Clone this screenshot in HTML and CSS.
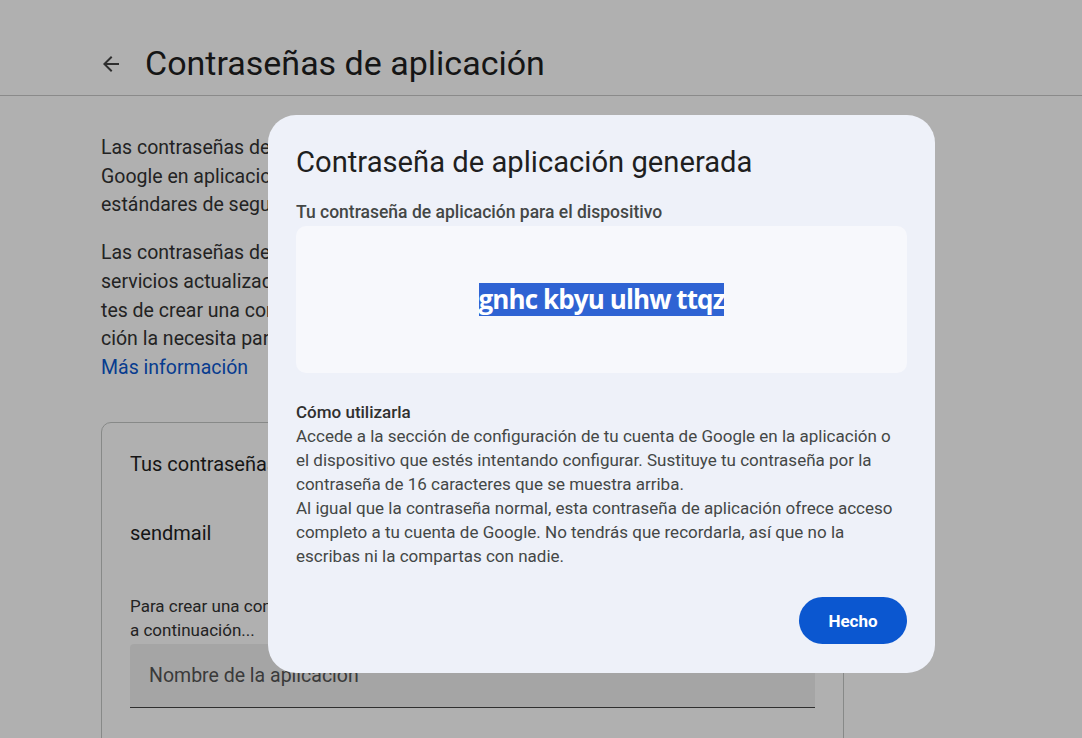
FILE: index.html
```html
<!DOCTYPE html>
<html lang="es">
<head>
    <meta charset="UTF-8">
    <meta name="viewport" content="width=device-width, initial-scale=1.0">
    <title>Contraseñas de aplicación</title>
    <link rel="stylesheet" href="styles.css">
</head>
<body>
    <header class="top-bar">
        <button class="back-btn" aria-label="Atrás">
            <svg width="24" height="24" viewBox="0 0 24 24"><path d="M20 11H7.83l5.59-5.59L12 4l-8 8 8 8 1.41-1.41L7.83 13H20v-2z" fill="currentColor"/></svg>
        </button>
        <h1>Contraseñas de aplicación</h1>
    </header>

    <main class="content">
        <p class="intro">Las contraseñas de aplicación te permiten iniciar sesión en tu cuenta de<br>Google en aplicaciones y servicios antiguos que no admiten los<br>estándares de seguridad modernos.</p>
        <p class="intro">Las contraseñas de aplicación son menos seguras que usar aplicaciones y<br>servicios actualizados que utilicen estándares de seguridad modernos. An-<br>tes de crear una contraseña de aplicación, comprueba si tu aplica-<br>ción la necesita para iniciar sesión.<br><a href="#" class="link">Más información</a></p>

        <section class="card">
            <h2>Tus contraseñas de aplicación</h2>
            <div class="app-row">sendmail</div>
            <p class="hint">Para crear una contraseña nueva específica de una aplicación, escribe un nombre<br>a continuación...</p>
            <div class="field">Nombre de la aplicación</div>
        </section>
    </main>

    <div class="scrim"></div>

    <div class="dialog" role="dialog">
        <h2 class="dialog-title">Contraseña de aplicación generada</h2>
        <div class="label">Tu contraseña de aplicación para el dispositivo</div>
        <div class="pass-box">
            <span class="pass">gnhc kbyu ulhw ttqz</span>
        </div>
        <div class="how">
            <div class="how-title">Cómo utilizarla</div>
            <p>Accede a la sección de configuración de tu cuenta de Google en la aplicación o el dispositivo que estés intentando configurar. Sustituye tu contraseña por la contraseña de 16 caracteres que se muestra arriba.<br>Al igual que la contraseña normal, esta contraseña de aplicación ofrece acceso completo a tu cuenta de Google. No tendrás que recordarla, así que no la escribas ni la compartas con nadie.</p>
        </div>
        <div class="actions">
            <button class="done-btn">Hecho</button>
        </div>
    </div>
</body>
</html>
```

FILE: styles.css
```css
body {
    margin: 0;
    background: #fff;
    color: #1f1f1f;
    font-family: Roboto, 'Liberation Sans', sans-serif;
    overflow: hidden;
}

.top-bar {
    display: flex;
    align-items: center;
    height: 96px;
    padding: 30px 0 0 99px;
    border-bottom: 1px solid #c8c8c8;
    box-sizing: border-box;
}

.back-btn {
    background: none;
    border: none;
    padding: 0;
    width: 24px;
    height: 24px;
    color: #444;
    margin-right: 22px;
    margin-top: 2px;
}

.top-bar h1 {
    margin: 0;
    font-weight: 400;
    font-size: 34px;
    line-height: 44px;
}

.content {
    padding: 38px 0 0 101px;
    width: 743px;
}

.intro {
    margin: 0 0 19px;
    font-size: 19.5px;
    line-height: 28.7px;
    color: #333;
    white-space: nowrap;
}

.link {
    color: #0b57d0;
    text-decoration: none;
}

.card {
    margin-top: 39px;
    border: 1px solid #c4c7c5;
    border-radius: 10px;
    padding: 27px 28px 40px;
    height: 400px;
}

.card h2 {
    margin: 0;
    font-size: 20px;
    font-weight: 400;
    line-height: 28px;
}

.app-row {
    font-size: 20px;
    line-height: 28px;
    margin-top: 41px;
}

.hint {
    margin: 47px 0 0;
    font-size: 17px;
    line-height: 24px;
    color: #333;
}

.field {
    margin-top: 2px;
    height: 64px;
    background: #f0f0f0;
    border-bottom: 1px solid #444;
    border-radius: 4px 4px 0 0;
    display: flex;
    align-items: center;
    padding-left: 19px;
    font-size: 19.5px;
    color: #555;
    box-sizing: border-box;
}

.scrim {
    position: fixed;
    inset: 0;
    background: rgba(0, 0, 0, 0.31);
}

.dialog {
    position: absolute;
    left: 268px;
    top: 115px;
    width: 667px;
    height: 558px;
    box-sizing: border-box;
    padding: 26px 28px 0;
    background: #eef1f9;
    border-radius: 28px;
    display: flex;
    flex-direction: column;
}

.dialog-title {
    margin: 0;
    font-weight: 400;
    font-size: 29.2px;
    line-height: 42px;
    color: #1f1f1f;
}

.label {
    margin-top: 18px;
    font-size: 17.5px;
    font-weight: 500;
    line-height: 22px;
    color: #444746;
}

.pass-box {
    margin-top: 3px;
    height: 147px;
    background: #f7f8fc;
    border-radius: 10px;
    display: flex;
    align-items: center;
    justify-content: center;
}

.pass {
    font-family: 'Open Sans', sans-serif;
    font-weight: 700;
    font-size: 26px;
    line-height: 33px;
    letter-spacing: -0.9px;
    background: #2f63d3;
    color: #fff;
}

.how {
    margin-top: 27px;
    font-size: 17px;
    line-height: 24px;
    color: #444746;
}

.how-title {
    font-weight: 500;
    color: #303030;
}

.how p {
    margin: 0;
}

.actions {
    margin-top: auto;
    padding-bottom: 29px;
    display: flex;
    justify-content: flex-end;
}

.done-btn {
    background: #0b57d0;
    color: #fff;
    border: none;
    border-radius: 24px;
    width: 108px;
    height: 47px;
    font-family: Roboto, sans-serif;
    font-size: 17px;
    font-weight: 700;
}
```
